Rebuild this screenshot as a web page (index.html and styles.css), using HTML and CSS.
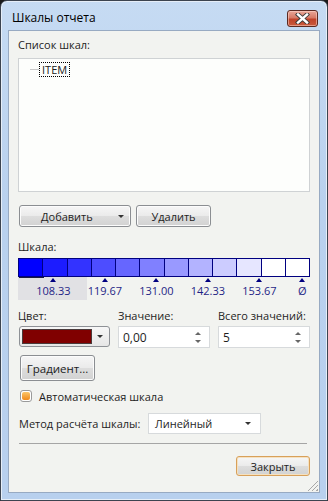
FILE: index.html
```html
<!DOCTYPE html>
<html lang="ru">
<head>
    <meta charset="UTF-8">
    <title>Шкалы отчета</title>
    <link rel="stylesheet" href="styles.css">
</head>
<body>
    <div class="window">
        <div class="title-bar">
            <span class="title">Шкалы отчета</span>
            <button class="close-btn">
                <svg width="17" height="11" viewBox="0 0 17 11">
                    <path d="M4 1.5 L13 9.5 M13 1.5 L4 9.5" stroke="#3a3a3a" stroke-width="4.2" stroke-linecap="square"/>
                    <path d="M4 1.5 L13 9.5 M13 1.5 L4 9.5" stroke="#fff" stroke-width="2.4" stroke-linecap="square"/>
                </svg>
            </button>
        </div>
        <div class="client">
            <div class="label">Список шкал:</div>
            <div class="list-box">
                <div class="tree-item">
                    <span class="tree-line"></span>
                    <span class="item-text">ITEM</span>
                </div>
            </div>

            <div class="btn-row">
                <button class="btn btn-add">Добавить <span class="arrow-down"></span></button>
                <button class="btn btn-del">Удалить</button>
            </div>

            <div class="label label-scale">Шкала:</div>
            <div class="scale">
                <div class="cell" style="background:#0000ff"></div>
                <div class="cell" style="background:#1c1cff"></div>
                <div class="cell" style="background:#3333ff"></div>
                <div class="cell" style="background:#4d4dff"></div>
                <div class="cell" style="background:#6666ff"></div>
                <div class="cell" style="background:#8080ff"></div>
                <div class="cell" style="background:#9999ff"></div>
                <div class="cell" style="background:#b3b3ff"></div>
                <div class="cell" style="background:#ccccff"></div>
                <div class="cell" style="background:#e6e6ff"></div>
                <div class="cell" style="background:#ffffff"></div>
                <div class="cell" style="background:#ffffff"></div>
            </div>
            <div class="ticks">
                <div class="selection"><span class="sel-mark"></span></div>
                <div class="tick t2">108.33</div>
                <div class="tick t4">119.67</div>
                <div class="tick t6">131.00</div>
                <div class="tick t8">142.33</div>
                <div class="tick t10">153.67</div>
                <div class="tick t12">Ø</div>
            </div>

            <div class="fields">
                <div class="field">
                    <div class="label">Цвет:</div>
                    <div class="color-combo">
                        <span class="swatch"></span>
                        <span class="arrow-down"></span>
                    </div>
                </div>
                <div class="field">
                    <div class="label">Значение:</div>
                    <div class="spin">
                        <span class="spin-value">0,00</span>
                        <span class="spin-arrows"><span class="up"></span><span class="down"></span></span>
                    </div>
                </div>
                <div class="field">
                    <div class="label">Всего значений:</div>
                    <div class="spin">
                        <span class="spin-value">5</span>
                        <span class="spin-arrows"><span class="up"></span><span class="down"></span></span>
                    </div>
                </div>
            </div>

            <button class="btn btn-gradient">Градиент...</button>

            <div class="check-row">
                <span class="checkbox"><span class="check-inner"></span></span>
                <span>Автоматическая шкала</span>
            </div>

            <div class="method-row">
                <span>Метод расчёта шкалы:</span>
                <div class="combo">
                    <span>Линейный</span>
                    <span class="arrow-down"></span>
                </div>
            </div>

            <div class="separator"></div>

            <div class="footer">
                <button class="btn btn-close">Закрыть</button>
            </div>
            <div class="grip"></div>
        </div>
    </div>
</body>
</html>
```

FILE: styles.css
```css
* {
    margin: 0;
    padding: 0;
    box-sizing: border-box;
}
html, body {
    width: 328px;
    height: 501px;
    overflow: hidden;
    background: #1a1a1a;
    font-family: "Open Sans", "Liberation Sans", sans-serif;
    font-size: 11px;
    color: #1e1e1e;
}
.window {
    width: 328px;
    height: 501px;
    border: 1px solid #3c4450;
    border-radius: 7px 7px 0 0;
    background: linear-gradient(180deg, #c6dbf3 0%, #b9d1ee 40%, #b8d0ee 100%);
    box-shadow: inset 0 0 0 1px #e6eef8;
    display: flex;
    flex-direction: column;
}
.title-bar {
    height: 29px;
    display: flex;
    align-items: flex-start;
    justify-content: space-between;
    padding: 0 9px 0 11px;
}
.title {
    font-size: 12px;
    color: #000;
    margin-top: 8px;
}
.close-btn {
    margin-top: 9px;
    width: 31px;
    height: 17px;
    border: 1px solid #5b2a22;
    border-radius: 3px;
    background: linear-gradient(180deg, #e9a799 0%, #d77a66 45%, #c0432a 55%, #c95a3d 100%);
    box-shadow: inset 0 0 0 1px rgba(255, 220, 210, 0.5);
    display: flex;
    align-items: center;
    justify-content: center;
}
.client {
    position: relative;
    margin: 0 7px 7px 7px;
    height: 463px;
    background: #f2f3f0;
    border: 1px solid #98aac2;
    padding: 7px 9px 0 9px;
}
.label {
    height: 14px;
    line-height: 14px;
}
.list-box {
    margin-top: 6px;
    height: 134px;
    background: #fdfefc;
    border: 1px solid #cfd2d4;
    padding: 3px 0 0 11px;
}
.tree-item {
    display: flex;
    align-items: center;
}
.tree-line {
    width: 9px;
    border-top: 1px solid #c8c8c8;
}
.item-text {
    border: 1px dotted #000;
    padding: 0 2px;
    line-height: 13px;
    color: #202020;
}
.btn-row {
    margin-top: 13px;
    display: flex;
    gap: 5px;
    padding-left: 1px;
}
.btn {
    font-family: inherit;
    font-size: 11px;
    color: #1e1e1e;
    height: 22px;
    border: 1px solid #8b8e92;
    border-radius: 3px;
    background: linear-gradient(180deg, #f6f6f6 0%, #ebebeb 48%, #dddddd 52%, #d2d2d2 100%);
    box-shadow: inset 0 0 0 1px #fcfcfc;
}
.btn-add {
    width: 112px;
    display: flex;
    align-items: center;
    justify-content: space-between;
    padding: 0 6px 0 21px;
}
.btn-del {
    width: 75px;
}
.arrow-down {
    width: 0;
    height: 0;
    border-left: 3px solid transparent;
    border-right: 3px solid transparent;
    border-top: 3px solid #333;
}
.label-scale {
    margin-top: 13px;
}
.scale {
    margin-top: 4px;
    width: 292px;
    height: 19px;
    display: grid;
    grid-template-columns: repeat(12, 1fr);
    gap: 1px;
    padding: 1px;
    background: #000080;
}
.ticks {
    width: 292px;
    height: 23px;
    display: grid;
    grid-template-columns: repeat(12, 1fr);
}
.selection {
    grid-column: 1 / 4;
    grid-row: 1;
    background: #e1e1e4;
}
.sel-mark {
    display: block;
    width: 25px;
    margin-left: 1px;
    border-top: 1px solid #1a1a40;
}
.tick {
    grid-row: 1;
    position: relative;
    text-align: center;
    white-space: nowrap;
    padding-top: 7px;
    line-height: 14px;
    color: #1f1f86;
    font-size: 11px;
    display: flex;
    justify-content: center;
    transform: translateX(1px);
}
.tick::before {
    content: "";
    position: absolute;
    top: 1px;
    left: 50%;
    margin-left: -3px;
    border-left: 3px solid transparent;
    border-right: 3px solid transparent;
    border-bottom: 4px solid #000080;
}
.t2 { grid-column: 2; }
.t4 { grid-column: 4; }
.t6 { grid-column: 6; }
.t8 { grid-column: 8; }
.t10 { grid-column: 10; }
.t12 { grid-column: 12; }
.fields {
    margin-top: 9px;
    display: flex;
    gap: 8px;
}
.field {
    width: 92px;
}
.field .label {
    margin-bottom: 3px;
}
.color-combo {
    height: 21px;
    border: 1px solid #8e9196;
    border-radius: 3px;
    background: linear-gradient(180deg, #f7f7f7 0%, #e6e6e6 100%);
    display: flex;
    align-items: center;
    padding: 0 6px 0 2px;
    justify-content: space-between;
    margin-left: 1px;
}
.swatch {
    width: 70px;
    height: 15px;
    background: #800000;
    border: 1px solid #4a3a3a;
}
.spin {
    height: 22px;
    background: #fff;
    border: 1px solid #d7dadc;
    display: flex;
    align-items: center;
    justify-content: space-between;
    padding: 0 8px 0 4px;
    font-size: 12px;
}
.spin-arrows {
    display: flex;
    flex-direction: column;
    gap: 5px;
}
.spin-arrows .up {
    border-left: 3px solid transparent;
    border-right: 3px solid transparent;
    border-bottom: 3px solid #666;
}
.spin-arrows .down {
    border-left: 3px solid transparent;
    border-right: 3px solid transparent;
    border-top: 3px solid #666;
}
.btn-gradient {
    margin: 7px 0 0 2px;
    width: 75px;
    height: 26px;
    font-size: 11.5px;
    font-weight: 400;
}
.check-row {
    margin-top: 8px;
    display: flex;
    align-items: center;
    gap: 7px;
    padding-left: 2px;
    height: 14px;
}
.checkbox {
    width: 12px;
    height: 12px;
    border: 1px solid #9a9a9a;
    border-radius: 3px;
    background: #fff;
    padding: 1px;
}
.check-inner {
    display: block;
    width: 8px;
    height: 8px;
    border-radius: 2px;
    background: linear-gradient(180deg, #fbc56a 0%, #f08a1c 100%);
}
.method-row {
    margin-top: 10px;
    display: flex;
    align-items: center;
    gap: 0;
    padding-left: 1px;
}
.method-row > span {
    width: 129px;
}
.combo {
    width: 113px;
    height: 21px;
    background: #fff;
    border: 1px solid #d7dadc;
    display: flex;
    align-items: center;
    justify-content: space-between;
    padding: 0 9px 0 6px;
}
.separator {
    margin: 9px 3px 0 1px;
    border-top: 1px solid #a5a5a5;
}
.footer {
    display: flex;
    justify-content: flex-end;
    margin-top: 12px;
}
.btn-close {
    width: 74px;
    height: 20px;
    border-color: #d8a05a;
    box-shadow: inset 0 0 0 1px #f5e1c0;
}
.grip {
    position: absolute;
    right: 1px;
    bottom: 1px;
    width: 11px;
    height: 11px;
    background: repeating-linear-gradient(135deg, transparent 0 2px, #a8a8a8 2px 3px);
    clip-path: polygon(100% 0, 100% 100%, 0 100%);
}
```
